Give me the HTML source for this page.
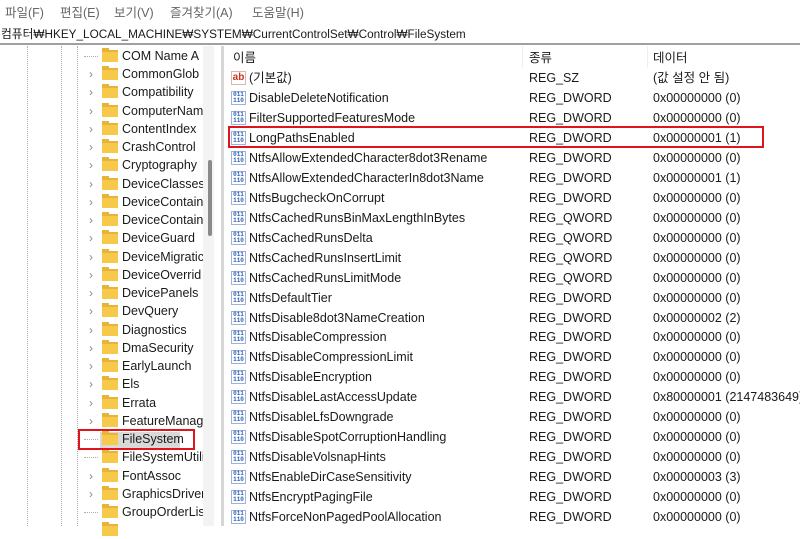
<!DOCTYPE html>
<html><head><meta charset="utf-8"><style>
*{margin:0;padding:0;box-sizing:border-box}
body{width:800px;height:526px;overflow:hidden;background:#fff;font-family:"Liberation Sans","Noto Sans CJK KR",sans-serif;font-size:12.5px;color:#1a1a1a;position:relative}
.menu{position:absolute;top:0;left:0;width:800px;height:24px;background:#fff;color:#666;font-size:12.5px}
.menu span{position:absolute;top:2px}
.addr{position:absolute;top:24px;left:0;width:800px;height:21px;border-bottom:2px solid #a0a0a0;font-size:11.75px;padding:1px 0 0 1px;white-space:nowrap}
.dl{position:absolute;top:46px;bottom:0;border-left:1px dotted #b0b0b0}
.t{position:absolute;left:0;height:18px;line-height:18px;white-space:nowrap}
.fold{position:absolute;left:102px;top:3px;width:16px;height:12px;background:#f6c94a;border-top:2px solid #e8b33a}
.fold:before{content:"";position:absolute;left:0;top:-4px;width:7px;height:3px;background:#e8b33a}
.lbl{position:absolute;left:122px}
.chev{position:absolute;left:89px;top:0;color:#888;font-size:12px}
.r{position:absolute;left:0;height:20px;line-height:20px;white-space:nowrap}
.ic{position:absolute;left:231px;top:3px;width:15px;height:14px;border:1px solid #9fb3d8;background:#fff;font:bold 6px/6px "Liberation Mono",monospace;color:#2d5fb3;text-align:center;padding-top:0}
.ab{position:absolute;left:231px;top:3px;width:15px;height:14px;background:#fff;border:1px solid #d8b8b0;color:#c8341d;font:bold 10px/12px "Liberation Sans",sans-serif;text-align:center}
.n{position:absolute;left:249px}.ty{position:absolute;left:529px}.da{position:absolute;left:653px}
</style></head><body>
<div class="menu"><span style="left:5px">파일(F)</span><span style="left:60px">편집(E)</span><span style="left:114px">보기(V)</span><span style="left:170px">즐겨찾기(A)</span><span style="left:252px">도움말(H)</span></div>
<div class="addr">컴퓨터₩HKEY_LOCAL_MACHINE₩SYSTEM₩CurrentControlSet₩Control₩FileSystem</div>
<div class="dl" style="left:27px"></div><div class="dl" style="left:61px"></div><div class="dl" style="left:77px"></div>
<div style="position:absolute;left:203px;top:46px;width:11px;height:480px;background:#f3f3f3"></div>
<div style="position:absolute;left:208px;top:160px;width:4px;height:76px;background:#8a8a8a;border-radius:2px"></div>
<div style="position:absolute;left:221px;top:46px;width:3px;height:480px;background:#d6d6d6"></div>
<div style="position:absolute;left:522px;top:46px;width:1px;height:22px;background:#eee"></div>
<div style="position:absolute;left:647px;top:46px;width:1px;height:22px;background:#eee"></div>
<div style="position:absolute;top:48px;left:0;width:800px;height:20px;line-height:20px"><span style="position:absolute;left:233px">이름</span><span style="position:absolute;left:529px">종류</span><span style="position:absolute;left:653px">데이터</span></div>
<div id="tree"></div><div id="list"></div>
<div style="position:absolute;left:78px;top:429px;width:117px;height:21px;border:2px solid #e0141e"></div>
<div style="position:absolute;left:100px;top:432px;width:80px;height:16px;background:#d9d9d9;z-index:-1"></div>
<div style="position:absolute;left:228px;top:126px;width:536px;height:22px;border:2px solid #e0141e"></div>
<script>
var tr=["COM Name A","CommonGlob","Compatibility","ComputerNam","ContentIndex","CrashControl","Cryptography","DeviceClasses","DeviceContain","DeviceContain","DeviceGuard","DeviceMigratic","DeviceOverrid","DevicePanels","DevQuery","Diagnostics","DmaSecurity","EarlyLaunch","Els","Errata","FeatureManag","FileSystem","FileSystemUtili","FontAssoc","GraphicsDriver","GroupOrderLis","x"];
var nochev={0:1,21:1,22:1,25:1};var h="";
tr.forEach(function(s,i){var y=47+i*18.24;if(s=="x"){h+='<div class="t" style="top:'+y+'px;width:200px"><div class="fold"></div></div>';return;}
h+='<div class="t" style="top:'+y+'px;width:203px;overflow:hidden">'+(nochev[i]?'<span style="position:absolute;left:84px;top:9px;width:14px;border-top:1px dotted #aaa"></span>':'<span class="chev">&#x203A;</span>')+'<div class="fold"></div><span class="lbl">'+s+'</span></div>';});
document.getElementById("tree").innerHTML=h;
var L=[["(기본값)","REG_SZ","(값 설정 안 됨)"],["DisableDeleteNotification","REG_DWORD","0x00000000 (0)"],["FilterSupportedFeaturesMode","REG_DWORD","0x00000000 (0)"],["LongPathsEnabled","REG_DWORD","0x00000001 (1)"],["NtfsAllowExtendedCharacter8dot3Rename","REG_DWORD","0x00000000 (0)"],["NtfsAllowExtendedCharacterIn8dot3Name","REG_DWORD","0x00000001 (1)"],["NtfsBugcheckOnCorrupt","REG_DWORD","0x00000000 (0)"],["NtfsCachedRunsBinMaxLengthInBytes","REG_QWORD","0x00000000 (0)"],["NtfsCachedRunsDelta","REG_QWORD","0x00000000 (0)"],["NtfsCachedRunsInsertLimit","REG_QWORD","0x00000000 (0)"],["NtfsCachedRunsLimitMode","REG_QWORD","0x00000000 (0)"],["NtfsDefaultTier","REG_DWORD","0x00000000 (0)"],["NtfsDisable8dot3NameCreation","REG_DWORD","0x00000002 (2)"],["NtfsDisableCompression","REG_DWORD","0x00000000 (0)"],["NtfsDisableCompressionLimit","REG_DWORD","0x00000000 (0)"],["NtfsDisableEncryption","REG_DWORD","0x00000000 (0)"],["NtfsDisableLastAccessUpdate","REG_DWORD","0x80000001 (2147483649)"],["NtfsDisableLfsDowngrade","REG_DWORD","0x00000000 (0)"],["NtfsDisableSpotCorruptionHandling","REG_DWORD","0x00000000 (0)"],["NtfsDisableVolsnapHints","REG_DWORD","0x00000000 (0)"],["NtfsEnableDirCaseSensitivity","REG_DWORD","0x00000003 (3)"],["NtfsEncryptPagingFile","REG_DWORD","0x00000000 (0)"],["NtfsForceNonPagedPoolAllocation","REG_DWORD","0x00000000 (0)"]];
h="";L.forEach(function(r,i){var y=68+i*19.96;h+='<div class="r" style="top:'+y+'px;width:800px">'+(i==0?'<span class="ab">ab</span>':'<span class="ic">011<br>110</span>')+'<span class="n">'+r[0]+'</span><span class="ty">'+r[1]+'</span><span class="da">'+r[2]+'</span></div>';});
document.getElementById("list").innerHTML=h;
</script>
</body></html>
